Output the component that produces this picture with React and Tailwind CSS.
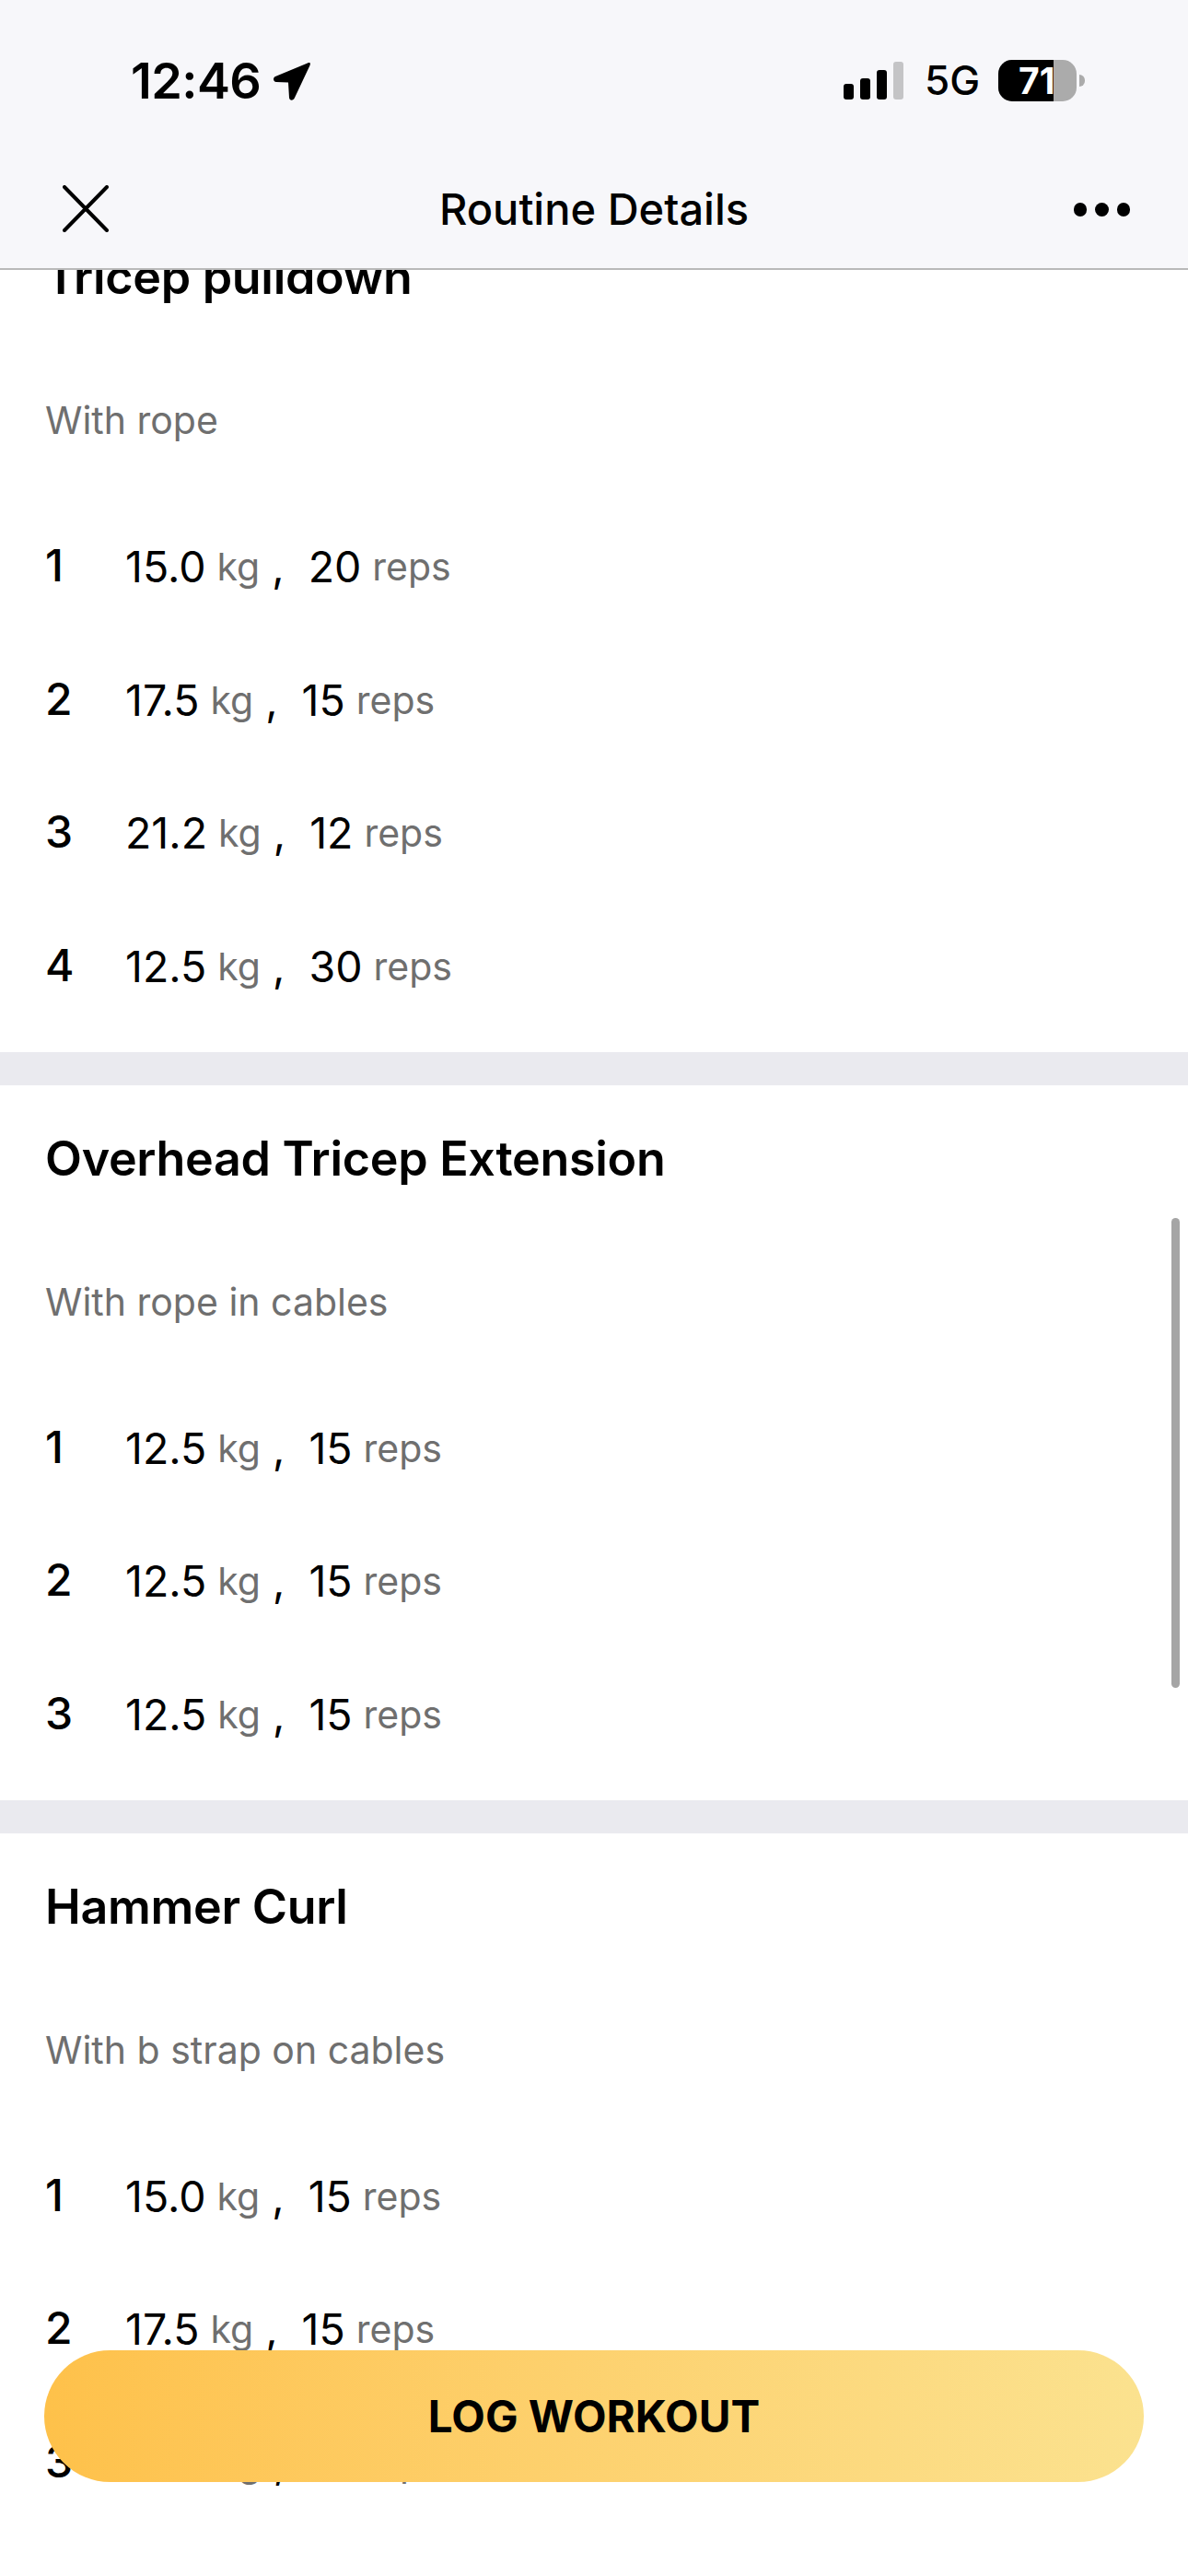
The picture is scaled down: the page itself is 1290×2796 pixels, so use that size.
import React from 'react';

const font = { fontFamily: 'Inter, "Liberation Sans", sans-serif' };

const sections = [
  {
    name: 'Tricep pulldown',
    note: 'With rope',
    sets: [['15.0', '20'], ['17.5', '15'], ['21.2', '12'], ['12.5', '30']],
  },
  {
    name: 'Overhead Tricep Extension',
    note: 'With rope in cables',
    sets: [['12.5', '15'], ['12.5', '15'], ['12.5', '15']],
  },
  {
    name: 'Hammer Curl',
    note: 'With b strap on cables',
    sets: [['15.0', '15'], ['17.5', '15'], ['21.2', '12']],
  },
];

const SetRow = ({ index, weight, reps }) => (
  <div className="flex h-[144.5px] items-center text-[46.5px] leading-[56px] text-black">
    <span className="-mt-[2px] w-[87px] text-[48px] font-medium">{index}</span>
    <span>{weight}</span>
    <span className="ml-[12px] text-[41px] text-[#6f6f6f]">kg</span>
    <span className="ml-[13px]">,</span>
    <span className="ml-[26px]">{reps}</span>
    <span className="ml-[12px] text-[41px] text-[#6f6f6f]">reps</span>
  </div>
);

const Section = ({ name, note, sets }) => (
  <section className="bg-white pb-[20.5px] pl-[49px] pt-[48px]">
    <h2 className="h-[64px] text-[52px] font-semibold leading-[64px] tracking-[-0.3px] text-black">{name}</h2>
    <p className="mt-[98px] h-[50px] text-[41px] leading-[50px] text-[#6f6f6f]">{note}</p>
    <div className="mt-[62px]">
      {sets.map((s, i) => (
        <SetRow key={i} index={i + 1} weight={s[0]} reps={s[1]} />
      ))}
    </div>
  </section>
);

const StatusBar = () => (
  <div className="flex h-[160px] items-start justify-between pl-[142px] pr-[112px] pt-[58px]">
    <div className="flex items-center gap-[13px]">
      <span className="text-[54px] font-semibold leading-[60px] tracking-[-0.6px] text-black">12:46</span>
      <svg width="41" height="42" viewBox="0 0 41 42">
        <path
          d="M38 1.5 L3 16 C0 17.5 0.5 22 4 22 L17 22.5 L18 39 C18.5 42.5 22.5 42.5 24 39 L40.5 4 C41.5 1.5 40.5 0.5 38 1.5 Z"
          fill="#000"
        />
      </svg>
    </div>
    <div className="flex items-center pt-[6px]">
      <div className="flex items-end gap-[7px]">
        <div className="h-[17px] w-[11px] rounded-[3px] bg-black" />
        <div className="h-[23px] w-[11px] rounded-[3px] bg-black" />
        <div className="h-[32px] w-[11px] rounded-[3px] bg-black" />
        <div className="h-[41px] w-[11px] rounded-[3px] bg-[#c4c4c6]" />
      </div>
      <span className="ml-[23px] w-[80px] text-[44px] font-medium leading-[46px] text-black">5G</span>
      <div className="h-[45px] w-[85px] overflow-hidden rounded-[15px] bg-[#ababab]">
        <div className="flex h-full w-[60px] items-center overflow-hidden bg-black pl-[22px]">
          <span className="text-[39px] font-bold leading-none text-white">71</span>
        </div>
      </div>
      <div className="ml-[3px] h-[13px] w-[6px] rounded-r-full bg-[#ababab]" />
    </div>
  </div>
);

const NavBar = () => (
  <div className="relative flex h-[133px] items-start justify-between border-b-2 border-[#b9b9b9] pl-[68px] pr-[63px] pt-[41px]">
    <svg width="50" height="51" viewBox="0 0 50 51" fill="none" stroke="#000" strokeWidth="4" strokeLinecap="round">
      <path d="M2 2 L48 49 M48 2 L2 49" />
    </svg>
    <span className="absolute left-0 right-0 top-[39px] text-center text-[47px] font-medium leading-[56px] text-black">
      Routine Details
    </span>
    <div className="flex gap-[9px] pt-[19px]">
      <div className="h-[15px] w-[14.5px] rounded-full bg-black" />
      <div className="h-[15px] w-[14.5px] rounded-full bg-black" />
      <div className="h-[15px] w-[14.5px] rounded-full bg-black" />
    </div>
  </div>
);

export default function App() {
  return (
    <div className="relative flex h-[2796px] w-[1290px] flex-col overflow-hidden bg-white" style={font}>
      <header className="relative z-10 bg-[#f7f7fa]">
        <StatusBar />
        <NavBar />
      </header>
      <main className="-mt-[72px] flex flex-col gap-[36px] bg-[#eaeaef]">
        {sections.map((s) => (
          <Section key={s.name} {...s} />
        ))}
      </main>
      {/* scrollbar */}
      <div className="absolute left-[1272px] top-[1322px] h-[510px] w-[9px] rounded-full bg-[#a5a5a5]" />
      <button className="absolute left-[48px] top-[2551px] flex h-[143px] w-[1194px] items-center justify-center rounded-[72px] bg-gradient-to-r from-[#fec14a] to-[#fbe28f] text-[47.5px] font-bold text-black">
        LOG WORKOUT
      </button>
    </div>
  );
}
